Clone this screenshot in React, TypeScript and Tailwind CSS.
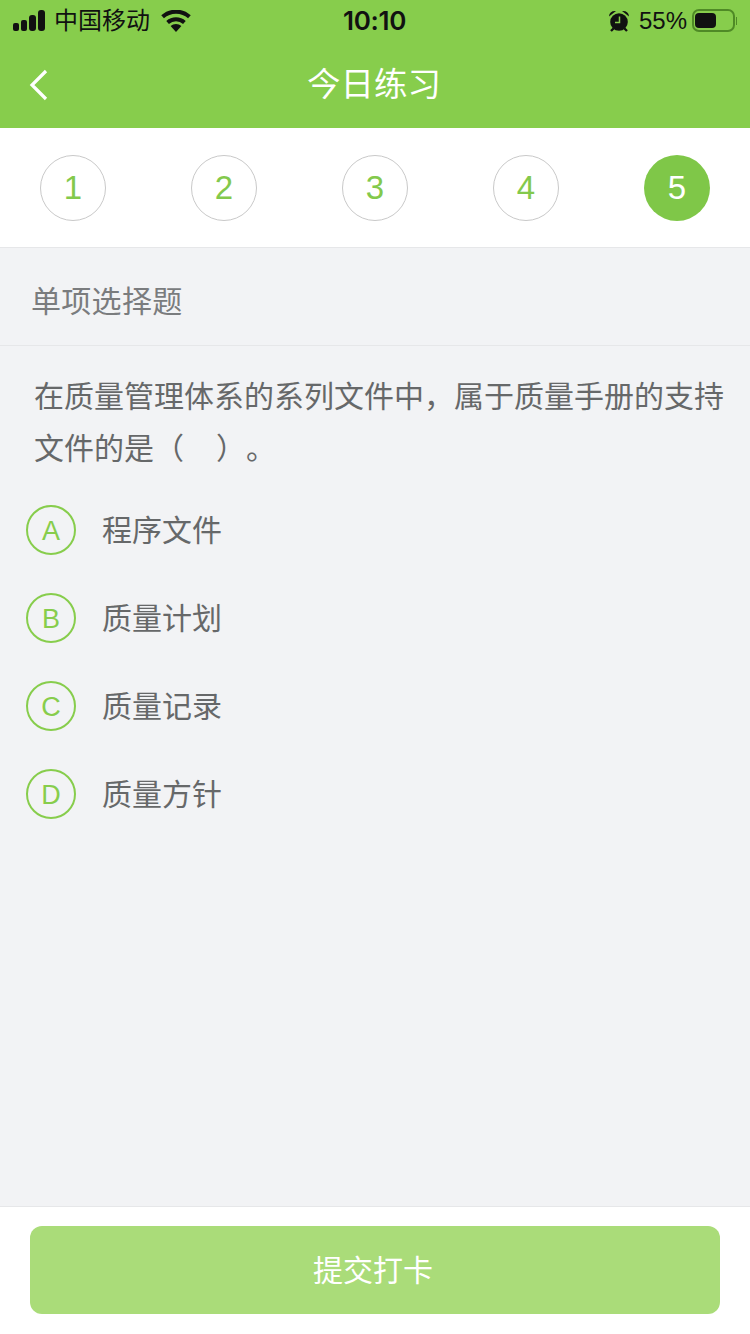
const steps = [1, 2, 3, 4, 5];

const options = [
  { key: "A", label: "程序文件" },
  { key: "B", label: "质量计划" },
  { key: "C", label: "质量记录" },
  { key: "D", label: "质量方针" },
];

function StatusBar() {
  return (
    <div className="relative flex h-10 items-center justify-between pt-[1px] text-[#111]">
      <div className="flex items-center pl-[13px]">
        <div className="flex items-end gap-[2px]">
          <span className="h-[8px] w-[6px] rounded-[2px] bg-[#111]" />
          <span className="h-[11px] w-[6px] rounded-[2px] bg-[#111]" />
          <span className="h-[16px] w-[7px] rounded-[3px] bg-[#111]" />
          <span className="h-[21px] w-[7px] rounded-[3px] bg-[#111]" />
        </div>
        <span className="ml-[9px] text-[24px] leading-none">中国移动</span>
        <svg width="30" height="22" viewBox="0 0 30 22" className="ml-[11px]">
          <path d="M15 22 L9.6 16 a8 8 0 0 1 10.8 0 Z" fill="#111" />
          <path d="M6.6 12.4 a12.6 12.6 0 0 1 16.8 0" fill="none" stroke="#111" strokeWidth="4" />
          <path d="M1.6 6.8 a20 20 0 0 1 26.8 0" fill="none" stroke="#111" strokeWidth="4" />
        </svg>
      </div>
      <span className="absolute left-[343px] top-[7px] font-['Inter'] text-[26px] leading-[28px] font-semibold tracking-[-0.3px]">
        10:10
      </span>
      <div className="flex items-center pr-[13px]">
        <svg width="22" height="22" viewBox="0 0 22 22">
          <circle cx="11" cy="12" r="8.8" fill="#111" />
          <path d="M11.5 6.5 V12.5 H7" fill="none" stroke="#87cd4c" strokeWidth="1.5" />
          <path d="M1 6.5 Q1.5 0.5 8 1 Z M21 6.5 Q20.5 0.5 14 1 Z" fill="#111" />
          <path d="M5.5 18.5 L3 21 M16.5 18.5 L19 21" stroke="#111" strokeWidth="2.4" />
        </svg>
        <span className="ml-[9px] text-[24px] leading-none">55%</span>
        <div className="ml-[5px] flex h-[23px] w-[43px] items-center rounded-[7px] border-2 border-[#4f8a26] p-[1px]">
          <span className="h-[15px] w-[21px] rounded-[4px] bg-[#111]" />
        </div>
        <span className="ml-[1px] h-[8px] w-[1px] bg-[#4f8a26]" />
      </div>
    </div>
  );
}

export default function App() {
  return (
    <div className="flex h-[1334px] w-[750px] flex-col overflow-hidden bg-[#f2f3f5] font-['Liberation_Sans','Noto_Sans_CJK_SC',sans-serif]">
      <header className="h-[128px] bg-[#87cd4c]">
        <StatusBar />
        <div className="relative flex h-[88px] items-center justify-center pt-[1px] pr-[2px]">
          <svg width="20" height="32" viewBox="0 0 20 32" className="absolute left-[29px] top-[29px]">
            <path d="M17 2 L3 16 L17 30" fill="none" stroke="#fff" strokeWidth="3.2" />
          </svg>
          <h1 className="text-[33.5px] leading-none text-white">今日练习</h1>
        </div>
      </header>

      <nav className="flex h-[120px] items-center justify-between border-b border-[#e6e7e9] bg-white px-10 pt-[1px]">
        {steps.map((step) => (
          <div
            key={step}
            className={
              step === 5
                ? "flex h-[66px] w-[66px] items-center justify-center rounded-full bg-[#7fc748] text-[33px] text-white"
                : "flex h-[66px] w-[66px] items-center justify-center rounded-full border border-[#c9c9c9] text-[33px] text-[#83c94c]"
            }
          >
            {step}
          </div>
        ))}
      </nav>

      <div className="flex h-[98px] items-center border-b border-[#e6e7e9] pl-[31px] pt-[10px] text-[30px] tracking-[0.3px] text-[#7a7c7e]">
        单项选择题
      </div>

      <div className="pl-[34px] pr-[20px] pt-[25px] text-[30px] leading-[52px] text-[#666869]">
        <p>在质量管理体系的系列文件中，属于质量手册的支持</p>
        <p className="flex">
          <span>文件的是（</span>
          <span className="ml-[32px]">）</span>
          <span>。</span>
        </p>
      </div>

      <ul className="mt-[11px] flex flex-col">
        {options.map((option) => (
          <li key={option.key} className="flex h-[88px] items-center pl-[26px]">
            <span className="flex h-[50px] w-[50px] items-center justify-center rounded-full border-2 border-[#87cd4c] pt-[2px] text-[27px] text-[#87cd4c]">
              {option.key}
            </span>
            <span className="ml-[26px] text-[30px] text-[#666869]">{option.label}</span>
          </li>
        ))}
      </ul>

      <footer className="mt-auto h-[128px] border-t border-[#e6e7e9] bg-white px-[30px] pt-[19px]">
        <button
          type="button"
          className="flex h-[88px] w-full items-center justify-center rounded-[12px] bg-[#aadc79] pr-[4px] text-[30px] text-white"
        >
          提交打卡
        </button>
      </footer>
    </div>
  );
}
